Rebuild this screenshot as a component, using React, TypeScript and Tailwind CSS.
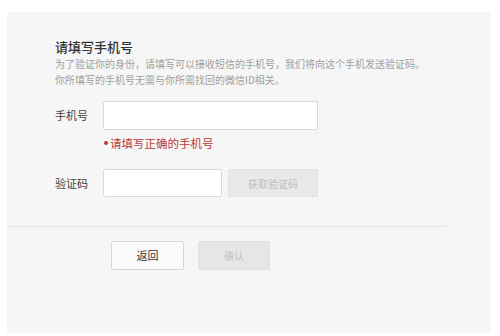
export default function App() {
  const font = { fontFamily: '"Noto Sans CJK SC", "Noto Sans", sans-serif' };

  return (
    <div className="w-[500px] h-[336px] bg-white pt-[12px] overflow-hidden" style={font}>
      <div className="ml-[7px] w-[483px] h-[321px] bg-[#f6f6f6]">
        <div className="pl-[48px] pt-[26px]">
          <h1 className="text-[13px] leading-[18px] text-[#333] font-medium">请填写手机号</h1>
          <p className="text-[10px] leading-[16px] text-[#a0a0a0]">
            为了验证你的身份，请填写可以接收短信的手机号，我们将向这个手机发送验证码。
            <br />
            你所填写的手机号无需与你所需找回的微信ID相关。
          </p>

          <div className="mt-[13px] flex items-center">
            <label className="w-[48px] text-[11px] text-[#444]">手机号</label>
            <input
              type="text"
              className="w-[215px] h-[29px] bg-white border border-[#d9d9d9] rounded-[2px] outline-none px-2 text-[11px]"
            />
          </div>
          <div className="mt-[5px] ml-[49px] flex items-center gap-[2px] text-[11.5px] leading-[16px] text-[#b93a3a]">
            <span className="w-[4px] h-[4px] rounded-full bg-[#c0392b]" />
            <span>请填写正确的手机号</span>
          </div>

          <div className="mt-[18px] flex items-center">
            <label className="w-[48px] text-[11px] text-[#444]">验证码</label>
            <input
              type="text"
              className="w-[119px] h-[28px] bg-white border border-[#d9d9d9] rounded-[2px] outline-none px-2 text-[11px]"
            />
            <button className="ml-[6px] w-[90px] h-[28px] bg-[#e9e9e9] border border-[#e2e2e2] rounded-[2px] text-[10px] text-[#bdbdbd]">
              获取验证码
            </button>
          </div>
        </div>

        <div className="mt-[29px] w-[440px] h-px bg-[#e4e4e4]" />

        <div className="mt-[14px] ml-[104px] flex gap-[14px]">
          <button className="w-[73px] h-[29px] bg-[#fafafa] border border-[#d6d6d6] rounded-[2px] text-[11px] text-[#333]">
            返回
          </button>
          <button className="w-[72px] h-[29px] bg-[#e6e6e6] border border-[#e0e0e0] rounded-[2px] text-[10px] text-[#c4c4c4]">
            确认
          </button>
        </div>
      </div>
    </div>
  );
}
